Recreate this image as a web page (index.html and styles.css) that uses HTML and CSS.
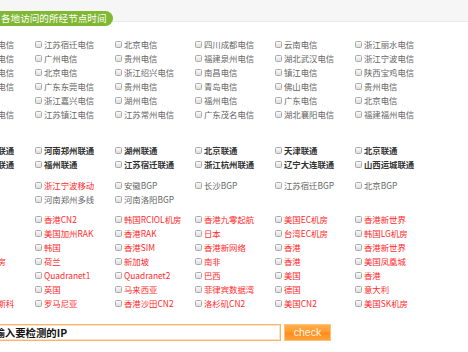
FILE: index.html
```html
<!DOCTYPE html>
<html lang="zh-CN">
<head>
<meta charset="utf-8">
<title>节点检测</title>
<link rel="stylesheet" href="styles.css">
</head>
<body>
<div class="page">
  <div class="header"><span class="tab">各地访问的所经节点时间</span></div>

  <div class="nodes">
    <div class="group telecom">
      <label class="node"><input type="checkbox"><span>上海浦东电信</span></label>
      <label class="node"><input type="checkbox"><span>江苏宿迁电信</span></label>
      <label class="node"><input type="checkbox"><span>北京电信</span></label>
      <label class="node"><input type="checkbox"><span>四川成都电信</span></label>
      <label class="node"><input type="checkbox"><span>云南电信</span></label>
      <label class="node"><input type="checkbox"><span>浙江丽水电信</span></label>

      <label class="node"><input type="checkbox"><span>江苏扬州电信</span></label>
      <label class="node"><input type="checkbox"><span>广州电信</span></label>
      <label class="node"><input type="checkbox"><span>贵州电信</span></label>
      <label class="node"><input type="checkbox"><span>福建泉州电信</span></label>
      <label class="node"><input type="checkbox"><span>湖北武汉电信</span></label>
      <label class="node"><input type="checkbox"><span>浙江宁波电信</span></label>

      <label class="node"><input type="checkbox"><span>江西南昌电信</span></label>
      <label class="node"><input type="checkbox"><span>北京电信</span></label>
      <label class="node"><input type="checkbox"><span>浙江绍兴电信</span></label>
      <label class="node"><input type="checkbox"><span>南昌电信</span></label>
      <label class="node"><input type="checkbox"><span>镇江电信</span></label>
      <label class="node"><input type="checkbox"><span>陕西宝鸡电信</span></label>

      <label class="node"><input type="checkbox"><span>山东青岛电信</span></label>
      <label class="node"><input type="checkbox"><span>广东东莞电信</span></label>
      <label class="node"><input type="checkbox"><span>贵州电信</span></label>
      <label class="node"><input type="checkbox"><span>青岛电信</span></label>
      <label class="node"><input type="checkbox"><span>佛山电信</span></label>
      <label class="node"><input type="checkbox"><span>贵州电信</span></label>

      <label class="node"><input type="checkbox"><span>上海电信</span></label>
      <label class="node"><input type="checkbox"><span>浙江嘉兴电信</span></label>
      <label class="node"><input type="checkbox"><span>湖州电信</span></label>
      <label class="node"><input type="checkbox"><span>福州电信</span></label>
      <label class="node"><input type="checkbox"><span>广东电信</span></label>
      <label class="node"><input type="checkbox"><span>北京电信</span></label>

      <label class="node"><input type="checkbox"><span>广东茂名电信</span></label>
      <label class="node"><input type="checkbox"><span>江苏镇江电信</span></label>
      <label class="node"><input type="checkbox"><span>江苏常州电信</span></label>
      <label class="node"><input type="checkbox"><span>广东茂名电信</span></label>
      <label class="node"><input type="checkbox"><span>湖北襄阳电信</span></label>
      <label class="node"><input type="checkbox"><span>福建福州电信</span></label>
    </div>

    <div class="group unicom">
      <label class="node"><input type="checkbox"><span>山东济南联通</span></label>
      <label class="node"><input type="checkbox"><span>河南郑州联通</span></label>
      <label class="node"><input type="checkbox"><span>湖州联通</span></label>
      <label class="node"><input type="checkbox"><span>北京联通</span></label>
      <label class="node"><input type="checkbox"><span>天津联通</span></label>
      <label class="node"><input type="checkbox"><span>北京联通</span></label>

      <label class="node"><input type="checkbox"><span>江苏南京联通</span></label>
      <label class="node"><input type="checkbox"><span>福州联通</span></label>
      <label class="node"><input type="checkbox"><span>江苏宿迁联通</span></label>
      <label class="node"><input type="checkbox"><span>浙江杭州联通</span></label>
      <label class="node"><input type="checkbox"><span>辽宁大连联通</span></label>
      <label class="node"><input type="checkbox"><span>山西运城联通</span></label>
    </div>

    <div class="group bgp">
      <span class="node"></span>
      <label class="node red"><input type="checkbox"><span>浙江宁波移动</span></label>
      <label class="node"><input type="checkbox"><span>安徽BGP</span></label>
      <label class="node"><input type="checkbox"><span>长沙BGP</span></label>
      <label class="node"><input type="checkbox"><span>江苏宿迁BGP</span></label>
      <label class="node"><input type="checkbox"><span>北京BGP</span></label>

      <span class="node"></span>
      <label class="node"><input type="checkbox"><span>河南郑州多线</span></label>
      <label class="node"><input type="checkbox"><span>河南洛阳BGP</span></label>
    </div>

    <div class="group intl">
      <span class="node"></span>
      <label class="node"><input type="checkbox"><span>香港CN2</span></label>
      <label class="node"><input type="checkbox"><span>韩国RCIOL机房</span></label>
      <label class="node"><input type="checkbox"><span>香港九零起航</span></label>
      <label class="node"><input type="checkbox"><span>美国EC机房</span></label>
      <label class="node"><input type="checkbox"><span>香港新世界</span></label>

      <span class="node"></span>
      <label class="node"><input type="checkbox"><span>美国加州RAK</span></label>
      <label class="node"><input type="checkbox"><span>香港RAK</span></label>
      <label class="node"><input type="checkbox"><span>日本</span></label>
      <label class="node"><input type="checkbox"><span>台湾EC机房</span></label>
      <label class="node"><input type="checkbox"><span>韩国LG机房</span></label>

      <span class="node"></span>
      <label class="node"><input type="checkbox"><span>韩国</span></label>
      <label class="node"><input type="checkbox"><span>香港SIM</span></label>
      <label class="node"><input type="checkbox"><span>香港新网络</span></label>
      <label class="node"><input type="checkbox"><span>香港</span></label>
      <label class="node"><input type="checkbox"><span>香港新世界</span></label>

      <label class="node"><input type="checkbox"><span>新加坡机房</span></label>
      <label class="node"><input type="checkbox"><span>荷兰</span></label>
      <label class="node"><input type="checkbox"><span>新加坡</span></label>
      <label class="node"><input type="checkbox"><span>南非</span></label>
      <label class="node"><input type="checkbox"><span>香港</span></label>
      <label class="node"><input type="checkbox"><span>美国凤凰城</span></label>

      <span class="node"></span>
      <label class="node"><input type="checkbox"><span>Quadranet1</span></label>
      <label class="node"><input type="checkbox"><span>Quadranet2</span></label>
      <label class="node"><input type="checkbox"><span>巴西</span></label>
      <label class="node"><input type="checkbox"><span>美国</span></label>
      <label class="node"><input type="checkbox"><span>香港</span></label>

      <span class="node"></span>
      <label class="node"><input type="checkbox"><span>英国</span></label>
      <label class="node"><input type="checkbox"><span>马来西亚</span></label>
      <label class="node"><input type="checkbox"><span>菲律宾数据湾</span></label>
      <label class="node"><input type="checkbox"><span>德国</span></label>
      <label class="node"><input type="checkbox"><span>意大利</span></label>

      <label class="node"><input type="checkbox"><span>俄罗斯莫斯科</span></label>
      <label class="node"><input type="checkbox"><span>罗马尼亚</span></label>
      <label class="node"><input type="checkbox"><span>香港沙田CN2</span></label>
      <label class="node"><input type="checkbox"><span>洛杉矶CN2</span></label>
      <label class="node"><input type="checkbox"><span>美国CN2</span></label>
      <label class="node"><input type="checkbox"><span>美国SK机房</span></label>
    </div>
  </div>

  <div class="check-row">
    <input class="ip" type="text" value="请输入要检测的IP">
    <button class="check-btn" type="button">check</button>
  </div>
</div>
</body>
</html>
```

FILE: styles.css
```css
html, body {
  margin: 0;
  padding: 0;
  background: #ffffff;
}

body {
  font-family: "Noto Sans CJK SC", "Liberation Sans", sans-serif;
  width: 468px;
  height: 352px;
  overflow: hidden;
}

.page {
  width: 468px;
  overflow: hidden;
}

.header {
  height: 22px;
  box-sizing: border-box;
  background: #f6f6f6;
  border-bottom: 1px solid #ebebeb;
  padding-top: 3px;
}

.tab {
  display: inline-block;
  margin-left: -12px;
  padding: 0 6px 0 13px;
  height: 15px;
  line-height: 15px;
  background: #80b834;
  border-radius: 0 8px 8px 0;
  color: #ffffff;
  font-size: 9.6px;
  white-space: nowrap;
}

.nodes {
  margin-left: -45px;
  padding-top: 15px;
}

.group {
  display: grid;
  grid-template-columns: repeat(6, 80px);
  grid-auto-rows: 14px;
}

.unicom {
  margin-top: 22px;
}

.bgp {
  margin-top: 7px;
}

.intl {
  margin-top: 6px;
}

.node {
  display: flex;
  align-items: center;
  gap: 2px;
  white-space: nowrap;
  font-size: 8.4px;
  line-height: 14px;
  color: #666666;
}

.node input {
  appearance: none;
  -webkit-appearance: none;
  flex: none;
  width: 7px;
  height: 7px;
  margin: 0;
  border: 1px solid #aaaaaa;
  border-radius: 1.5px;
  background: linear-gradient(#fbfbfb, #dedede);
  box-sizing: border-box;
}

.unicom .node {
  font-weight: bold;
  color: #333333;
}

.red,
.intl .node {
  color: #ff2a2a;
}

.check-row {
  display: flex;
  align-items: center;
  gap: 3px;
  margin-left: -19px;
  margin-top: 14px;
}

.ip {
  width: 300px;
  height: 17px;
  box-sizing: border-box;
  margin: 0;
  padding: 0 0 0 2px;
  border: 1px solid #f9b46a;
  box-shadow: inset 0 0 0 1px #fde3c6;
  font-family: "Noto Sans CJK SC", "Liberation Sans", sans-serif;
  font-size: 10.4px;
  font-weight: bold;
  color: #111111;
  outline: none;
}

.check-btn {
  width: 47px;
  height: 17px;
  margin: 0;
  padding: 0;
  border: 1px solid #fcc27c;
  background: linear-gradient(#ffb04f 0%, #ff9a2c 45%, #ff8d1c 55%, #ffa23c 100%);
  color: #fff6ea;
  font-family: "Liberation Sans", Arial, sans-serif;
  font-size: 10.5px;
  line-height: 15px;
}
```
